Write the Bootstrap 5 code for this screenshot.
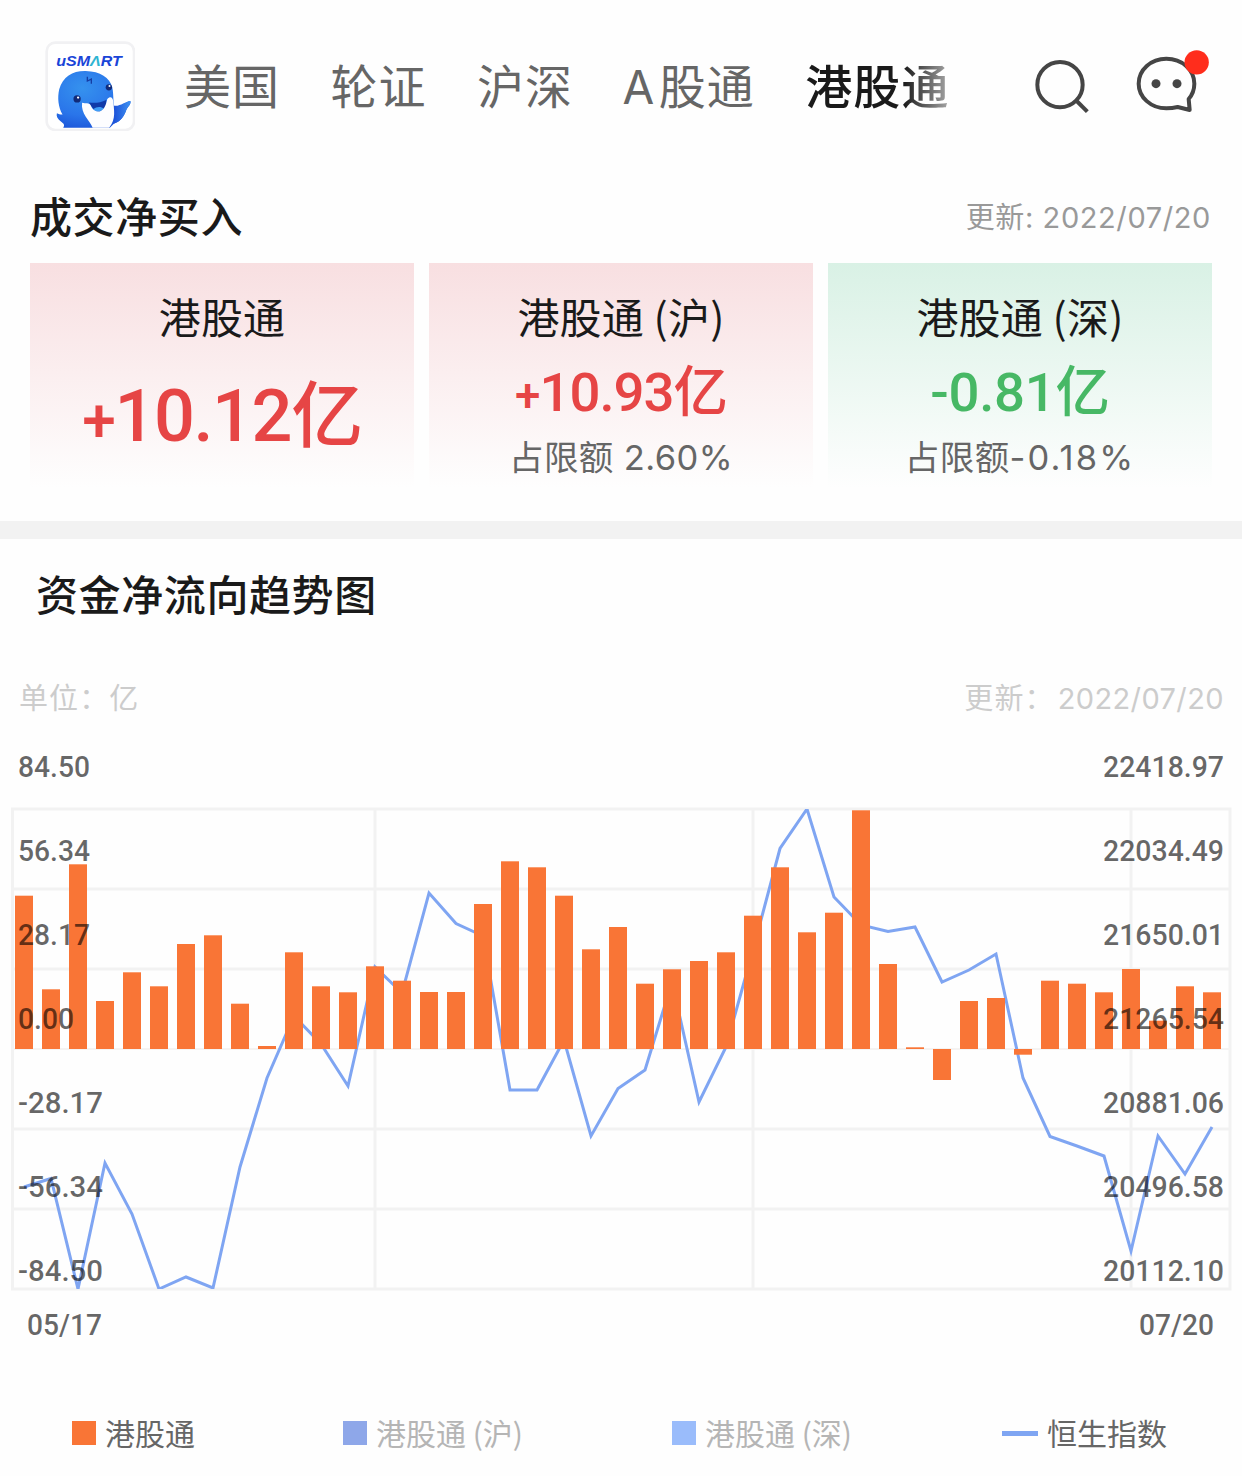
<!DOCTYPE html>
<html lang="zh-CN">
<head>
<meta charset="utf-8">
<meta name="viewport" content="width=device-width, initial-scale=1">
<title>港股通</title>
<link href="https://cdn.jsdelivr.net/npm/bootstrap@5.3.0/dist/css/bootstrap.min.css" rel="stylesheet">
<style>
body{font-family:Inter,"Noto Sans CJK SC",sans-serif;background:#fefefe;color:#1a1a1a;width:1242px;height:1476px;overflow:hidden}
.topbar{height:172px;padding-left:45px}
.logo{width:90px;height:90px;flex:none;margin-bottom:1px}
.tabs{margin-left:49px;gap:50.3px;margin-bottom:1px;font-family:"Noto Sans CJK SC",sans-serif;font-size:47px;letter-spacing:1.1px;color:#666;line-height:70px;width:764px;overflow:hidden;white-space:nowrap}
.latin{font-family:Inter,sans-serif;font-size:46px;letter-spacing:4.5px;margin-left:-1px}
.tab-on{font-weight:500;color:transparent;background:linear-gradient(90deg,#1a1a1a 68%,#aaa 100%);-webkit-background-clip:text;background-clip:text}
.search{width:60px;height:60px;margin-left:84px;margin-bottom:1px;flex:none}
.chat{width:80px;height:70px;margin-left:41px;margin-top:-8px;flex:none}
.sec-title{font-family:"Noto Sans CJK SC",sans-serif;font-weight:500;font-size:42px;letter-spacing:.6px;line-height:60px;white-space:nowrap}
.buy-head{height:91px;padding:0 31px 0 30px}
.buy-head .sec-title{margin-bottom:6px}
.stamp{font-size:29px;letter-spacing:.6px;color:#999;line-height:40px;padding-top:1px}
.flows{gap:15px;padding:0 30px;height:258px}
.flow{height:225px;flex:1 1 0;text-align:center;white-space:nowrap}
.flow-up{background:linear-gradient(#f8dfe1,#fefefe)}
.flow-down{background:linear-gradient(#d9f1e5,#fefefe)}
.flow-name{font-family:"Noto Sans CJK SC",sans-serif;font-size:42px;letter-spacing:.2px;line-height:60px;margin-top:23px;height:60px}
.figure-lg,.figure-md{font-family:Roboto,"Noto Sans CJK SC",sans-serif;font-weight:500}
.figure-lg{font-size:72px;line-height:90px;height:90px;margin-top:26px;letter-spacing:-1.4px}
.figure-md{font-size:54.500px;line-height:66px;height:66px;margin-top:13px;letter-spacing:-1px}
.figure-md.down{letter-spacing:-.3px}
.sign{font-size:.84em}
.up{color:#e64545}.down{color:#47b865}
.quota{font-size:34.5px;line-height:44px;color:#666;margin-top:11px;letter-spacing:.4px}
.wide-num{letter-spacing:2.1px}
.divider{height:18px;background:#f2f2f2}
.trend-head{height:107px;padding-left:36px}
.unit-row{height:94px;padding:12px 18px 0 19px;font-size:29px;color:#ccc;line-height:40px;letter-spacing:1.1px}
.unit-date{letter-spacing:.4px;margin-left:3px}
.chart{display:block}
.chart text{font-family:Roboto,sans-serif;font-size:29.5px;font-weight:500;fill:rgba(0,0,0,.6)}
.legend-row{height:86px;font-family:"Noto Sans CJK SC",sans-serif;font-size:30px;color:#666;padding-left:72px;line-height:44px;white-space:nowrap}
.legend-row span:not(.key){margin-bottom:3px}
.key{height:24px;width:24px;margin-right:9px;flex:none}
.off{color:#b5b5b5}
</style>
</head>
<body>
<header class="topbar d-flex align-items-center">
  <svg class="logo" viewBox="44 31 272 272">
    <defs>
      <radialGradient id="skin" cx=".35" cy=".3" r=".8"><stop offset="0" stop-color="#3592ee"/><stop offset=".6" stop-color="#2a75ea"/><stop offset="1" stop-color="#1950d6"/></radialGradient>
      <linearGradient id="fin"><stop offset="0" stop-color="#1c50d8"/><stop offset="1" stop-color="#3f93f2"/></linearGradient>
    </defs>
    <rect x="49" y="36" width="264" height="264" rx="26" fill="#fff" stroke="#f1f1f3" stroke-width="8"/>
    <text x="78" y="108" font-family="Liberation Sans, sans-serif" font-weight="bold" font-style="italic" font-size="46" fill="#1a45d8" textLength="198" lengthAdjust="spacingAndGlyphs">uSM<tspan fill="#2fb5d2">Λ</tspan>RT</text>
    <path d="M99 293C105 284 100 280 92 274C82 266 77 257 80 249C86 252 92 254 97 253C84 232 81 202 87 177C98 139 128 121 167 122C211 123 240 143 247 170C250 181 250 195 251 213L252 236C270 233 286 214 302 212C305 222 294 229 290 239C284 258 271 276 252 281L240 293Z" fill="url(#skin)"/>
    <path d="M252 226C270 230 286 213 302 212C305 222 294 229 290 239C284 258 271 276 251 281Z" fill="url(#fin)"/>
    <path d="M177 217C195 219 212 218 229 209C231 224 225 240 209 244C194 244 184 231 177 217Z" fill="#103aa9"/>
    <path d="M190 237C200 228 214 229 222 235C216 244 200 248 190 237Z" fill="#3f9df7"/>
    <path d="M156 218C168 221 176 217 182 225C187 239 198 245 209 244C223 241 229 221 232 207C240 198 248 199 250 212C252 238 260 265 238 293H188C178 270 152 251 156 218Z" fill="#fdfdff"/>
    <circle cx="141" cy="206" r="11" fill="#112a78"/><circle cx="144" cy="202" r="3.5" fill="#fff"/>
    <circle cx="237" cy="171" r="9.500" fill="#112a78"/><circle cx="239" cy="167" r="3" fill="#fff"/>
    <path d="M172 139V152L184 146V160" fill="none" stroke="#153ca3" stroke-width="4"/>
  </svg>
  <nav class="tabs d-flex">
    <span>美国</span><span>轮证</span><span>沪深</span><span><span class="latin">A</span>股通</span><span class="tab-on">港股通</span>
  </nav>
  <svg class="search" viewBox="755 75 180 180" fill="none" stroke="#454545" stroke-width="12"><circle cx="839" cy="161" r="68"/><path d="M886 207L921 242"/></svg>
  <svg class="chat" viewBox="1060 50 240 210"><path d="M1194 230C1178 234 1169 234 1160 234C1114 234 1077 201 1077 160C1077 118 1114 85 1160 85C1207 85 1244 118 1244 160C1244 178 1238 193 1227 206L1230 239Z" fill="none" stroke="#454545" stroke-width="12" stroke-linejoin="round"/><circle cx="1129" cy="160" r="13.500" fill="#454545"/><circle cx="1192" cy="160" r="13.500" fill="#454545"/><circle cx="1251" cy="96" r="36.500" fill="#ff2d1c"/></svg>
</header>
<section>
  <div class="buy-head d-flex align-items-center justify-content-between">
    <div class="sec-title">成交净买入</div><div class="stamp">更新: 2022/07/20</div>
  </div>
  <div class="flows d-flex">
    <div class="flow flow-up d-flex flex-column"><div class="flow-name">港股通</div><div class="figure-lg up"><span class="sign">+</span>10.12亿</div></div>
    <div class="flow flow-up d-flex flex-column"><div class="flow-name">港股通 (沪)</div><div class="figure-md up"><span class="sign">+</span>10.93亿</div><div class="quota">占限额 2.60%</div></div>
    <div class="flow flow-down d-flex flex-column"><div class="flow-name">港股通 (深)</div><div class="figure-md down">-0.81亿</div><div class="quota">占限额<span class="wide-num">-0.18%</span></div></div>
  </div>
</section>
<div class="divider"></div>
<section>
  <div class="trend-head d-flex align-items-center"><div class="sec-title">资金净流向趋势图</div></div>
  <div class="unit-row d-flex align-items-center justify-content-between"><span>单位：亿</span><span>更新：<span class="unit-date">2022/07/20</span></span></div>
  <svg class="chart" id="chart" width="1242" height="650" viewBox="0 740 1242 650"></svg>
  <div class="legend-row d-flex align-items-center">
    <span class="key" style="background:#f97536"></span><span>港股通</span>
    <span class="key" style="background:#8ea7e9;margin-left:148px"></span><span class="off">港股通 (沪)</span>
    <span class="key" style="background:#9abcfb;margin-left:149px"></span><span class="off">港股通 (深)</span>
    <span class="key" style="background:#7fa5f2;height:5px;width:36px;margin-left:150px"></span><span>恒生指数</span>
  </div>
</section>
<script>
const bars=[895.7,989.3,864.3,1001,972.3,986.3,944,935.3,1003.7,1046,952.3,986.3,992.3,966.3,980.7,992,992,904,861.3,867.3,895.7,949.3,927,983.7,969.3,961,952.3,915.7,867.3,932.3,912.7,810.3,964,1047.3,1080,1001,998,1054.7,980.7,983.7,992.3,969,1020.7,986.3,992.3];
const index=[1187,1178.5,1289,1163,1214,1289,1277,1288,1167,1078,1016,1044,1086,967,993,893,923.5,936,1090,1090,1040,1136,1088.5,1070,982,1102,1047,950,848.5,809,897,925,931.5,927,982,970,954,1078,1136.5,1146,1156,1251,1136,1174,1127];
const zero=1049, px=i=>24+27*i;
let s='<defs><clipPath id="plot"><rect x="12" y="809" width="1218" height="480"/></clipPath></defs><g stroke="#f2f2f2" stroke-width="3" fill="none"><rect x="12.500" y="809" width="1217.500" height="480"/>';
for(const y of [889,969,1129,1209]) s+=`<path d="M12 ${y}H1230"/>`;
s+='<path d="M12 1049H1230" stroke="#f5f3f2" stroke-width="2"/>';
for(const x of [375,753,1131]) s+=`<path d="M${x} 809V1289"/>`;
s+='</g><polyline clip-path="url(#plot)" fill="none" stroke="#7fa5f2" stroke-width="3" points="'+index.map((y,i)=>px(i)+','+y).join(' ')+'"/><g fill="#f97536">';
bars.forEach((y,i)=>{s+=`<rect x="${px(i)-9}" y="${Math.min(y,zero)}" width="18" height="${Math.abs(y-zero)}"/>`});
s+='</g>';
['84.50','56.34','28.17','0.00','-28.17','-56.34','-84.50'].forEach((t,i)=>{s+=`<text x="18" y="${777+84*i}" textLength="${{4:56,5:72,6:85}[t.length]}" lengthAdjust="spacingAndGlyphs">${t}</text>`});
['22418.97','22034.49','21650.01','21265.54','20881.06','20496.58','20112.10'].forEach((t,i)=>{s+=`<text x="1103" y="${777+84*i}" textLength="121" lengthAdjust="spacingAndGlyphs">${t}</text>`});
s+='<text x="27" y="1335" textLength="75" lengthAdjust="spacingAndGlyphs">05/17</text><text x="1139" y="1335" textLength="75" lengthAdjust="spacingAndGlyphs">07/20</text>';
document.getElementById('chart').innerHTML=s;
</script>
<script src="https://cdn.jsdelivr.net/npm/bootstrap@5.3.0/dist/js/bootstrap.bundle.min.js"></script>
</body>
</html>
